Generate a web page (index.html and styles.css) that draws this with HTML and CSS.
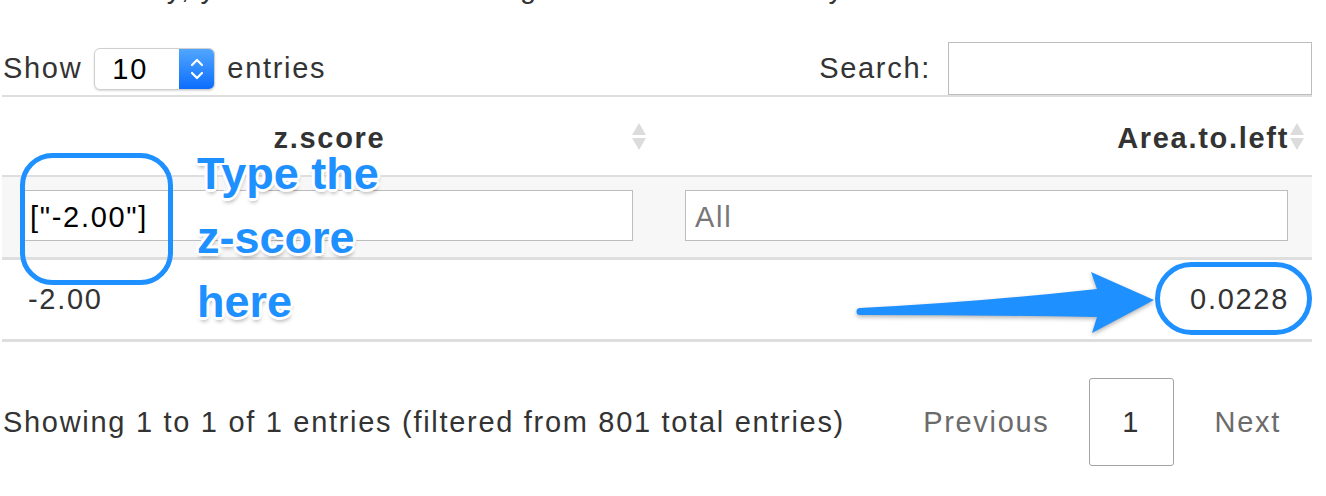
FILE: index.html
```html
<!DOCTYPE html>
<html>
<head>
<meta charset="utf-8">
<link rel="stylesheet" href="styles.css">
</head>
<body>
<div class="page">
  <p class="intro">Alternatively, you can filter this using the filter box directly.</p>

  <div class="controls">
    <div class="length">
      <span>Show</span>
      <span class="select">
        <span class="select-val">10</span>
        <span class="select-btn">
          <svg width="14" height="22" viewBox="0 0 14 22"><polyline points="2,7 7,2 12,7" fill="none" stroke="#fff" stroke-width="2.2" stroke-linecap="round" stroke-linejoin="round"/><polyline points="2,15 7,20 12,15" fill="none" stroke="#fff" stroke-width="2.2" stroke-linecap="round" stroke-linejoin="round"/></svg>
        </span>
      </span>
      <span>entries</span>
    </div>
    <div class="search">
      <span>Search:</span>
      <span class="search-input"></span>
    </div>
  </div>

  <div class="table">
    <div class="thead">
      <div class="th th-center">z.score
        <svg class="sort" width="14" height="27" viewBox="0 0 14 27"><polygon points="7,0 14,12 0,12" fill="#dcdcdc"/><polygon points="0,15 14,15 7,27" fill="#dcdcdc"/></svg>
      </div>
      <div class="th th-right">Area.to.left
        <svg class="sort sort-r" width="14" height="27" viewBox="0 0 14 27"><polygon points="7,0 14,12 0,12" fill="#dcdcdc"/><polygon points="0,15 14,15 7,27" fill="#dcdcdc"/></svg>
      </div>
    </div>
    <div class="filters">
      <div class="fcell fcell-1"><div class="finput">["-2.00"]</div></div>
      <div class="fcell fcell-2"><div class="finput placeholder">All</div></div>
    </div>
    <div class="row">
      <div class="td td-left">-2.00</div>
      <div class="td td-right">0.0228</div>
    </div>
  </div>

  <div class="footer">
    <div class="info">Showing 1 to 1 of 1 entries (filtered from 801 total entries)</div>
    <div class="paginate">
      <span class="pbtn prev">Previous</span>
      <span class="pbtn current">1</span>
      <span class="pbtn next">Next</span>
    </div>
  </div>

  <svg class="marks" width="1326" height="496" viewBox="0 0 1326 496">
    <rect x="22.5" y="155.5" width="148" height="127" rx="30" fill="none" stroke="#1e90ff" stroke-width="5"/>
    <rect x="1157.5" y="264.5" width="152" height="68" rx="34" fill="none" stroke="#1e90ff" stroke-width="5"/>
    <path class="arrow" d="M 860 308 Q 980 302 1097 289 L 1091 272 L 1154 300 L 1092 333 L 1097 317 Q 980 315 860 315 A 3.5 3.5 0 0 1 860 308 Z" fill="#1e90ff"/>
  </svg>

  <div class="note">Type the<br>z-score<br>here</div>
</div>
</body>
</html>
```

FILE: styles.css
```css
* {
  box-sizing: border-box;
}

html, body {
  margin: 0;
  padding: 0;
  background: #fff;
  overflow: hidden;
}

body {
  font-family: "Liberation Sans", Arial, sans-serif;
  font-size: 29px;
  letter-spacing: 1.7px;
  color: #333;
}

.page {
  position: relative;
  display: flow-root;
  width: 1326px;
  height: 496px;
  padding: 0 14px 0 2px;
}

.intro {
  margin: -28px 0 0 1px;
  line-height: 33px;
  white-space: nowrap;
}

.controls {
  display: flex;
  justify-content: space-between;
  align-items: center;
  height: 54px;
  margin-top: 36px;
}

.length {
  display: flex;
  align-items: center;
  gap: 12px;
  padding-left: 1px;
  margin-top: 1px;
}

.select {
  display: flex;
  width: 121px;
  height: 42px;
  border: 1px solid #cfcfcf;
  border-radius: 6px;
  overflow: hidden;
  background: #fff;
  box-shadow: 0 1px 2px rgba(0, 0, 0, 0.15);
}

.select-val {
  flex: 1;
  padding-left: 17px;
  line-height: 40px;
  color: #000;
}

.select-btn {
  width: 35px;
  display: flex;
  align-items: center;
  justify-content: center;
  background: linear-gradient(#52a6ff, #0b6dfd);
}

.search {
  display: flex;
  align-items: center;
  gap: 17px;
}

.search-input {
  width: 364px;
  height: 53px;
  border: 1px solid #bdbdbd;
  background: #fff;
}

.table {
  border-top: 2px solid #dedede;
}

.thead,
.filters,
.row {
  display: grid;
  grid-template-columns: 655px 655px;
}

.thead {
  height: 80px;
  border-bottom: 2px solid #dedede;
}

.th {
  position: relative;
  display: flex;
  align-items: center;
  padding-top: 4px;
  font-weight: bold;
  color: #333;
}

.th-center {
  justify-content: center;
  padding-left: 0;
}

.th-right {
  justify-content: flex-end;
  padding-right: 23px;
}

.sort {
  position: absolute;
  top: 26px;
  right: 11px;
}

.sort-r {
  right: 8px;
}

.filters {
  height: 83px;
  background: #f7f7f7;
  border-bottom: 3px solid #dedede;
}

.fcell {
  padding-top: 13px;
}

.fcell-1 {
  padding-left: 18px;
  padding-right: 24px;
}

.fcell-2 {
  padding-left: 28px;
  padding-right: 24px;
}

.finput {
  height: 51px;
  border: 1px solid #bdbdbd;
  background: #fff;
  padding-left: 9px;
  line-height: 53px;
  color: #000;
}

.placeholder {
  color: #777;
}

.row {
  height: 82px;
  border-bottom: 3px solid #dedede;
}

.td {
  display: flex;
  align-items: center;
}

.td-left {
  padding-left: 26px;
}

.td-right {
  justify-content: flex-end;
  padding-right: 23px;
}

.footer {
  display: flex;
  justify-content: space-between;
  align-items: center;
  margin-top: 36px;
  height: 88px;
}

.info {
  padding-left: 1px;
}

.paginate {
  display: flex;
  align-items: center;
  padding-right: 31px;
}

.pbtn {
  color: #6b6b6b;
}

.prev {
  margin-right: 39px;
}

.next {
  margin-left: 41px;
}

.pbtn.current {
  width: 85px;
  height: 88px;
  display: flex;
  align-items: center;
  justify-content: center;
  border: 1px solid #a3a3a3;
  border-radius: 3px;
  background: #fff;
  color: #333;
}

.marks {
  position: absolute;
  left: 0;
  top: 0;
  pointer-events: none;
}

.arrow {
  filter: drop-shadow(0 2px 2px rgba(0, 0, 0, 0.3));
}

.note {
  position: absolute;
  left: 197px;
  top: 142px;
  font-family: "Liberation Sans", Arial, sans-serif;
  font-weight: bold;
  font-size: 45px;
  line-height: 64px;
  letter-spacing: 0;
  color: #1e90ff;
  text-shadow:
    -3px 0 #fff, 3px 0 #fff, 0 -3px #fff, 0 3px #fff,
    -2px -2px #fff, 2px -2px #fff, -2px 2px #fff, 2px 2px #fff,
    1px 4px 4px rgba(0, 0, 0, 0.35);
}
```
